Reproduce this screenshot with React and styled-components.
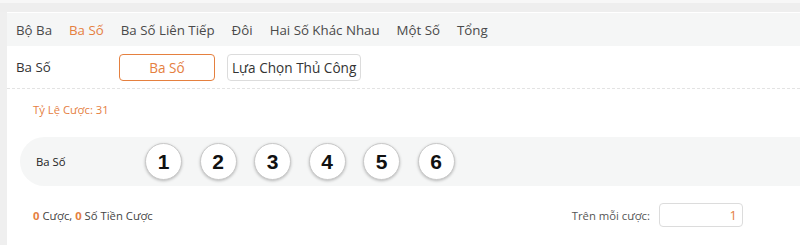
import React from "react";
import styled, { createGlobalStyle } from "styled-components";

const Global = createGlobalStyle`
  html, body { margin: 0; padding: 0; background: #efefef; }
  body { font-family: "Open Sans", "Noto Sans", sans-serif; }
  * { box-sizing: border-box; }
`;

const ORANGE = "#e5803f";

const Page = styled.div`
  width: 800px;
  height: 245px;
  overflow: hidden;
  background: #eeeeee;
  border-top: 3px solid #f7f7f7;
`;

const Main = styled.div`
  margin-top: 9px;
  display: flex;
  height: 233px;
`;

const Rail = styled.div`
  width: 7px;
  background: #efefef;
`;

const Content = styled.div`
  flex: 1;
  background: #ffffff;
  padding-top: 1px;
  overflow: hidden;
`;

const TabBar = styled.div`
  height: 33px;
  background: #f5f6f6;
  display: flex;
  align-items: center;
  padding-left: 9px;
  gap: 17px;
`;

const Tab = styled.div`
  font-size: 13.3px;
  color: ${(p) => (p.$active ? ORANGE : "#4a4a4a")};
  white-space: nowrap;
`;

const TypeRow = styled.div`
  height: 43px;
  display: flex;
  align-items: center;
  padding-left: 9px;
  border-bottom: 1px dashed #e3e3e3;
`;

const RowLabel = styled.div`
  width: 103px;
  font-size: 13.3px;
  color: #333;
`;

const Choice = styled.div`
  height: 27px;
  border-radius: 4px;
  border: 1px solid ${(p) => (p.$active ? ORANGE : "#dcdcdc")};
  color: ${(p) => (p.$active ? ORANGE : "#333")};
  font-size: 13.6px;
  display: flex;
  align-items: center;
  justify-content: ${(p) => (p.$active ? "center" : "flex-start")};
  width: ${(p) => (p.$active ? "96px" : "auto")};
  padding: 0 4px;
  margin-right: 12px;
  white-space: nowrap;
`;

const Rate = styled.div`
  padding: 13px 0 0 26px;
  height: 47px;
  font-size: 11.3px;
  color: ${ORANGE};
`;

const BallPanel = styled.div`
  margin-left: 13px;
  height: 49px;
  margin-top: 1px;
  background: #f5f6f6;
  border-radius: 25px 0 0 25px;
  display: flex;
  align-items: center;
  padding-left: 16px;
`;

const BallLabel = styled.div`
  width: 109px;
  font-size: 11.3px;
  color: #222;
`;

const Balls = styled.div`
  display: flex;
  gap: 17.5px;
`;

const Ball = styled.div`
  width: 37px;
  height: 37px;
  border-radius: 50%;
  background: #fff;
  border: 1px solid #c9c9c9;
  box-shadow: 0 1px 3px rgba(0, 0, 0, 0.25);
  display: flex;
  align-items: center;
  justify-content: center;
  font-family: "Liberation Sans", Arial, sans-serif;
  font-weight: 700;
  font-size: 21px;
  color: #111;
`;

const Footer = styled.div`
  display: flex;
  align-items: center;
  justify-content: space-between;
  padding: 0 57px 0 26px;
  margin-top: 17px;
  height: 24px;
`;

const Summary = styled.div`
  font-size: 11.3px;
  color: #444;
`;

const Num = styled.span`
  color: ${ORANGE};
  font-weight: 700;
`;

const PerBet = styled.div`
  display: flex;
  align-items: center;
  gap: 9px;
  font-size: 11.3px;
  color: #555;
`;

const Amount = styled.div`
  width: 84px;
  height: 24px;
  border: 1px solid #dcdcdc;
  border-radius: 4px;
  display: flex;
  align-items: center;
  justify-content: flex-end;
  padding-right: 5px;
  font-size: 13px;
  color: ${ORANGE};
`;

const tabs = ["Bộ Ba", "Ba Số", "Ba Số Liên Tiếp", "Đôi", "Hai Số Khác Nhau", "Một Số", "Tổng"];

export default function App() {
  return (
    <>
      <Global />
      <Page>
        <Main>
          <Rail />
          <Content>
            <TabBar>
              {tabs.map((t, i) => (
                <Tab key={t} $active={i === 1}>{t}</Tab>
              ))}
            </TabBar>
            <TypeRow>
              <RowLabel>Ba Số</RowLabel>
              <Choice $active>Ba Số</Choice>
              <Choice>Lựa Chọn Thủ Công</Choice>
            </TypeRow>
            <Rate>Tỷ Lệ Cược: 31</Rate>
            <BallPanel>
              <BallLabel>Ba Số</BallLabel>
              <Balls>
                {[1, 2, 3, 4, 5, 6].map((n) => (
                  <Ball key={n}>{n}</Ball>
                ))}
              </Balls>
            </BallPanel>
            <Footer>
              <Summary>
                <Num>0</Num> Cược, <Num>0</Num> Số Tiền Cược
              </Summary>
              <PerBet>
                Trên mỗi cược:
                <Amount>1</Amount>
              </PerBet>
            </Footer>
          </Content>
        </Main>
      </Page>
    </>
  );
}
